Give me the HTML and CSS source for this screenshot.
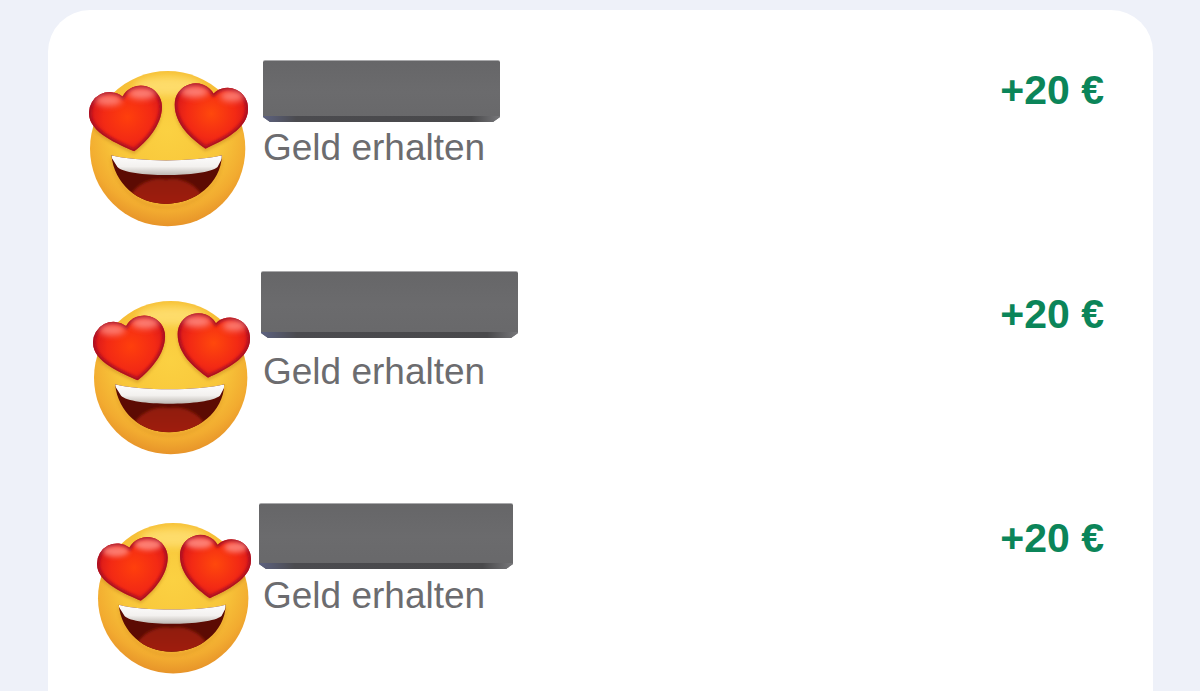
FILE: index.html
```html
<!DOCTYPE html>
<html lang="de">
<head>
<meta charset="utf-8">
<title>Geld erhalten</title>
<link rel="stylesheet" href="styles.css">
</head>
<body>
<svg class="sprite" aria-hidden="true">
  <defs>
    <radialGradient id="face" cx="50%" cy="38%" r="64%">
      <stop offset="0" stop-color="#fbd142"/>
      <stop offset=".55" stop-color="#f8c63a"/>
      <stop offset=".82" stop-color="#f2ab30"/>
      <stop offset="1" stop-color="#e58f28"/>
    </radialGradient>
    <radialGradient id="heartL" gradientUnits="userSpaceOnUse" cx="175" cy="200" r="120">
      <stop offset="0" stop-color="#ff3f0c"/>
      <stop offset=".6" stop-color="#f32a14"/>
      <stop offset="1" stop-color="#d4151c"/>
    </radialGradient>
    <radialGradient id="heartR" gradientUnits="userSpaceOnUse" cx="425" cy="190" r="120">
      <stop offset="0" stop-color="#ff480c"/>
      <stop offset=".6" stop-color="#f32a14"/>
      <stop offset="1" stop-color="#d4151c"/>
    </radialGradient>
    <linearGradient id="tongue" x1="0" y1="0" x2="0" y2="1">
      <stop offset="0" stop-color="#8f1e08"/>
      <stop offset="1" stop-color="#a31c06"/>
    </linearGradient>
    <linearGradient id="teeth" x1="0" y1="0" x2="0" y2="1">
      <stop offset="0" stop-color="#ffffff"/>
      <stop offset=".6" stop-color="#f3f1ef"/>
      <stop offset="1" stop-color="#bdb8b3"/>
    </linearGradient>
    <filter id="soft" x="-40%" y="-60%" width="180%" height="220%"><feGaussianBlur stdDeviation="11"/></filter>
    <filter id="softer" x="-30%" y="-40%" width="160%" height="180%"><feGaussianBlur stdDeviation="5"/></filter>
    <filter id="highlight" x="-50%" y="-80%" width="200%" height="260%"><feGaussianBlur stdDeviation="9"/></filter>
    <clipPath id="faceClip"><circle cx="295" cy="295" r="232"/></clipPath>
    <clipPath id="mouthClip"><path d="M127 315C200 335 380 335 457 315C455 400 375 460 290 460C205 460 135 400 127 315Z"/></clipPath>
    <path id="hl" d="M195 303C150 282 60 248 60 190A62 62 0 0 1 160 139A63 63 0 0 1 278 170C278 225 232 275 195 303Z"/>
    <path id="hr" d="M408 295C365 265 316 222 316 163A62.5 62.5 0 0 1 432 130A61 61 0 0 1 535 178C535 235 462 270 408 295Z"/>
    <clipPath id="clipL"><use href="#hl"/></clipPath>
    <clipPath id="clipR"><use href="#hr"/></clipPath>
    <symbol id="emoji" viewBox="60 60 478 472">
      <circle cx="295" cy="295" r="232" fill="url(#face)"/>
      <g clip-path="url(#faceClip)">
        <ellipse cx="295" cy="108" rx="100" ry="28" fill="#ffe27a" opacity=".75" filter="url(#soft)"/>
        <path d="M127 322C135 405 205 470 290 470C375 470 455 405 457 322" fill="none" stroke="#db8f22" stroke-width="6" opacity=".5" filter="url(#softer)"/>
        <use href="#hl" y="8" fill="#b8741a" opacity=".4" filter="url(#softer)"/>
        <use href="#hr" y="8" fill="#b8741a" opacity=".4" filter="url(#softer)"/>
      </g>
      <path d="M127 315C200 335 380 335 457 315C455 400 375 460 290 460C205 460 135 400 127 315Z" fill="#5c0b03"/>
      <g clip-path="url(#mouthClip)">
        <path d="M168 478C176 412 240 376 290 387C342 376 404 412 416 478Z" fill="url(#tongue)" filter="url(#softer)"/>
        <path d="M120 310C200 332 380 332 465 310L444 350C425 366 360 374 290 374C225 374 160 366 145 350Z" fill="url(#teeth)"/>
      </g>
      <use href="#hl" fill="url(#heartL)"/>
      <g clip-path="url(#clipL)">
        <use href="#hl" fill="none" stroke="#a50e20" stroke-width="14" filter="url(#softer)"/>
        <ellipse cx="118" cy="150" rx="40" ry="17" fill="#ff8f85" opacity=".8" filter="url(#highlight)"/>
        <ellipse cx="218" cy="130" rx="42" ry="17" fill="#ff8f85" opacity=".85" filter="url(#highlight)"/>
      </g>
      <use href="#hr" fill="url(#heartR)"/>
      <g clip-path="url(#clipR)">
        <use href="#hr" fill="none" stroke="#a50e20" stroke-width="14" filter="url(#softer)"/>
        <ellipse cx="375" cy="125" rx="42" ry="17" fill="#ff8f85" opacity=".85" filter="url(#highlight)"/>
        <ellipse cx="488" cy="138" rx="36" ry="16" fill="#ff8f85" opacity=".8" filter="url(#highlight)"/>
      </g>
    </symbol>
  </defs>
</svg>
<main class="card">
  <section class="row row-a">
    <svg class="emoji"><use href="#emoji"/></svg>
    <div class="info">
      <div class="mask"></div>
      <p class="label">Geld erhalten</p>
    </div>
    <p class="amount">+20 €</p>
  </section>
  <section class="row row-b">
    <svg class="emoji"><use href="#emoji"/></svg>
    <div class="info">
      <div class="mask"></div>
      <p class="label">Geld erhalten</p>
    </div>
    <p class="amount">+20 €</p>
  </section>
  <section class="row row-c">
    <svg class="emoji"><use href="#emoji"/></svg>
    <div class="info">
      <div class="mask"></div>
      <p class="label">Geld erhalten</p>
    </div>
    <p class="amount">+20 €</p>
  </section>
</main>
</body>
</html>
```
FILE: styles.css
```css
html, body {
  margin: 0;
  height: 691px;
  overflow: hidden;
  background: #eef1f9;
}
body {
  padding-top: 10px;
  box-sizing: border-box;
  font-family: "Liberation Sans", Arial, sans-serif;
}
.sprite {
  position: absolute;
  width: 0;
  height: 0;
}
.card {
  margin-left: 48px;
  width: 1105px;
  height: 681px;
  padding-top: 40px;
  box-sizing: border-box;
  background: #fff;
  border-radius: 42px 42px 0 0;
}
.row {
  display: grid;
  grid-template-columns: 211px 1fr auto;
  height: 224px;
  padding-right: 49px;
  align-items: start;
}
.row-c {
  height: 193px;
}
.emoji {
  display: block;
}
.info {
  display: flex;
  flex-direction: column;
  align-items: flex-start;
}
.mask {
  position: relative;
  overflow: hidden;
  background: linear-gradient(180deg, #666668 0, #6b6b6d 50%, #68686a 100%);
  border-top: 1px solid #a9a9ab;
  border-radius: 2px;
  box-sizing: border-box;
  clip-path: polygon(0 0, 100% 0, 100% calc(100% - 5px), calc(100% - 7px) 100%, 7px 100%, 0 calc(100% - 5px));
}
.mask::after {
  content: "";
  position: absolute;
  left: 0;
  right: 0;
  bottom: 0;
  height: 6px;
  background: linear-gradient(90deg, #5d6280 0, #4b4b4f 14%, #49494b 88%, #77777a 100%);
}
.label {
  margin: 1px 0 0 4px;
  font-size: 37px;
  line-height: 36px;
  color: #6c6c6f;
}
.amount {
  margin: 22px 0 0;
  font-size: 41px;
  line-height: 36px;
  font-weight: 700;
  color: #0b8559;
}
.row-a .emoji {
  width: 160px;
  height: 158px;
  margin: 20px 0 0 41px;
}
.row-a .mask {
  width: 237px;
  height: 62px;
  margin: 10px 0 7px 4px;
}
.row-b .emoji {
  width: 158px;
  height: 156px;
  margin: 26px 0 0 45px;
}
.row-b .mask {
  width: 257px;
  height: 67px;
  margin: -3px 0 15px 2px;
}
.row-c .emoji {
  width: 155px;
  height: 153px;
  margin: 24px 0 0 49px;
}
.row-c .mask {
  width: 254px;
  height: 66px;
  margin: 5px 0 8px 0;
}
```
